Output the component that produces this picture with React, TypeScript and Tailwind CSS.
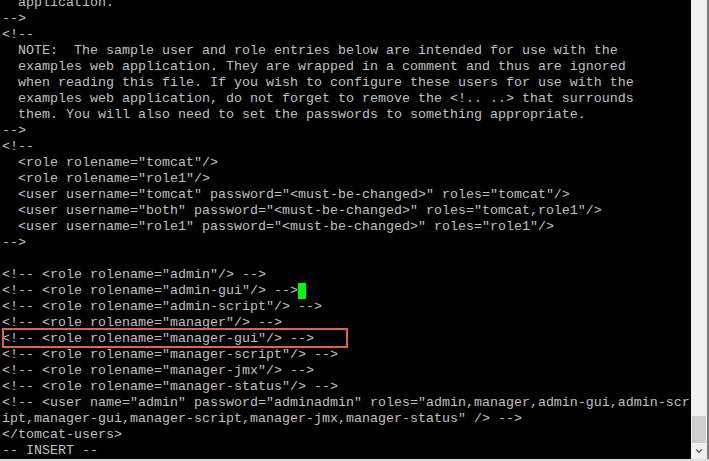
import { ChevronDown } from "lucide-react"

const lines = [
  "  application.",
  "-->",
  "<!--",
  "  NOTE:  The sample user and role entries below are intended for use with the",
  "  examples web application. They are wrapped in a comment and thus are ignored",
  "  when reading this file. If you wish to configure these users for use with the",
  "  examples web application, do not forget to remove the <!.. ..> that surrounds",
  "  them. You will also need to set the passwords to something appropriate.",
  "-->",
  "<!--",
  '  <role rolename="tomcat"/>',
  '  <role rolename="role1"/>',
  '  <user username="tomcat" password="<must-be-changed>" roles="tomcat"/>',
  '  <user username="both" password="<must-be-changed>" roles="tomcat,role1"/>',
  '  <user username="role1" password="<must-be-changed>" roles="role1"/>',
  "-->",
  "",
  '<!-- <role rolename="admin"/> -->',
  '<!-- <role rolename="admin-gui"/> -->',
  '<!-- <role rolename="admin-script"/> -->',
  '<!-- <role rolename="manager"/> -->',
  '<!-- <role rolename="manager-gui"/> -->',
  '<!-- <role rolename="manager-script"/> -->',
  '<!-- <role rolename="manager-jmx"/> -->',
  '<!-- <role rolename="manager-status"/> -->',
  '<!-- <user name="admin" password="adminadmin" roles="admin,manager,admin-gui,admin-scr',
  'ipt,manager-gui,manager-script,manager-jmx,manager-status" /> -->',
  "</tomcat-users>",
  "-- INSERT --",
]

export default function App() {
  return (
    <div className="w-[709px] h-[461px] flex flex-col bg-black overflow-hidden">
      <div className="flex flex-1 min-h-0">
        {/* terminal text */}
        <div className="flex-1 overflow-hidden pl-[2px] text-[#c0c0c0] text-[13.333px] leading-4 font-['Liberation_Mono','Courier_New',monospace]">
          <div className="-mt-[5px] flex flex-col">
            {lines.map((l, i) => (
              <div key={i} className="relative h-4 whitespace-pre">
                {l}
                {i === 18 && <span className="inline-block align-top w-2 h-4 bg-[#00ff00]" />}
                {i === 21 && (
                  <div className="absolute left-0 top-[-3px] w-[346px] h-[20px] border-2 border-[#d8674a]" />
                )}
              </div>
            ))}
          </div>
        </div>
        {/* scrollbar */}
        <div className="w-[16px] bg-[#f0f0f0] flex flex-col justify-end">
          <div className="mx-[1px] h-[27px] bg-[#cdcdcd]" />
          <div className="h-4 flex items-center justify-center">
            <ChevronDown className="w-[10px] h-[10px] text-[#606060]" strokeWidth={3} />
          </div>
        </div>
        <div className="w-[2px] bg-[#7a7a7a]" />
      </div>
      <div className="h-[2px] bg-[#e0e0e0]" />
    </div>
  )
}
